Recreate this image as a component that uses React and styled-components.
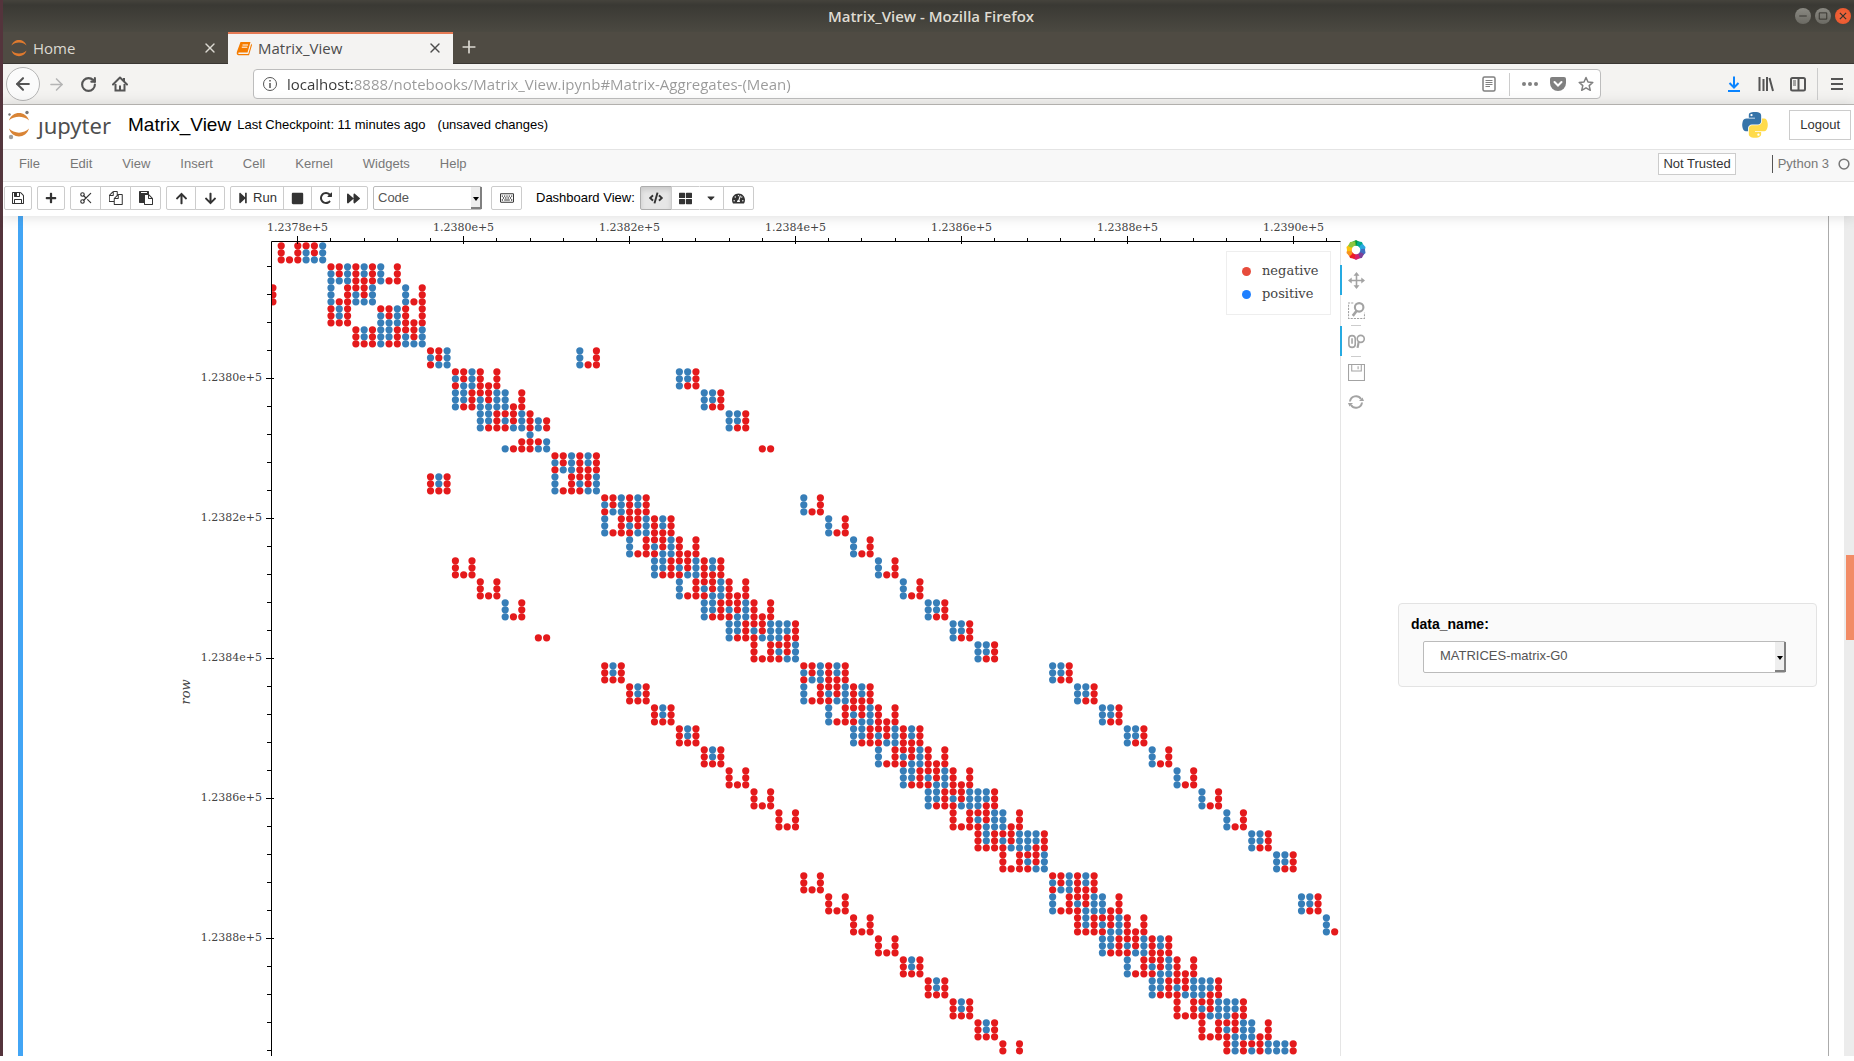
import React from "react";
import styled, { createGlobalStyle, css } from "styled-components";
import { Scissors, X, Plus, RotateCw, ArrowLeft, ArrowRight } from "lucide-react";
import {
  FaArrowUp,
  FaArrowDown,
  FaCaretDown,
  FaCode,
  FaForward,
  FaPlus,
  FaRegKeyboard,
  FaStepForward,
  FaStop,
  FaTachometerAlt,
  FaThLarge,
} from "react-icons/fa";

const sans = `"Liberation Sans", Arial, sans-serif`;
const chrome = `"Open Sans", "Noto Sans", sans-serif`;
const serif = `"DejaVu Serif", serif`;

const Global = createGlobalStyle`
  *, *::before, *::after { box-sizing: border-box; }
  body { margin: 0; background: #fff; font: 13px/18px ${sans}; color: #000; }
  button, input, select { font: inherit; color: inherit; margin: 0; }
  svg { display: block; flex: none; }
`;

/* ---------- window chrome ---------- */

const Window = styled.div`
  border-left: 3px solid #54343c;
`;

const TitleBar = styled.header`
  display: grid;
  grid-template-columns: 1fr auto 1fr;
  align-items: center;
  height: 32px;
  padding: 0 3px 0 8px;
  background: linear-gradient(#45433c, #3a3934 5px, #4b4941);
  color: #dfdbd2;
  font: 600 15px/20px ${chrome};
`;

const WindowTitle = styled.span`
  grid-column: 2;
  font: inherit;
`;

const WindowButtons = styled.div`
  display: flex;
  justify-content: flex-end;
  gap: 4px;
`;

const WindowButton = styled.button`
  display: grid;
  place-items: center;
  width: 16px;
  height: 16px;
  padding: 0;
  border: 0;
  border-radius: 8px;
  background: ${(p) => (p.$close ? "radial-gradient(#f4683e, #e9542a)" : "linear-gradient(#8a8982, #6b6a63)")};
  color: #33322d;
`;

const TabBar = styled.nav`
  display: flex;
  height: 32px;
  background: #4f4b43;
  border-bottom: 1px solid #3a3733;
`;

const Tab = styled.div`
  display: flex;
  align-items: center;
  gap: 6px;
  width: 225px;
  height: 32px;
  padding: 0 10px 2px 8px;
  font: 15px/20px ${chrome};
  color: ${(p) => (p.$active ? "#4c4c4c" : "#dcd9d2")};
  background: ${(p) => (p.$active ? "#f4f3f2" : "transparent")};
  border-top: 2px solid ${(p) => (p.$active ? "#e57a55" : "transparent")};
`;

const TabTitle = styled.span`
  flex: 1;
`;

const PlainButton = styled.button`
  display: grid;
  place-items: center;
  min-width: ${(p) => p.$width || 16}px;
  height: ${(p) => p.$height || 24}px;
  padding: 0;
  border: 0;
  background: none;
  color: ${(p) => p.$color || "inherit"};
`;

const NavBar = styled.div`
  display: flex;
  align-items: center;
  height: 41px;
  padding: 0 1px 0 3px;
  background: #f4f3f1;
  border-bottom: 1px solid #bdbbb8;
  color: #555;
`;

const BackButton = styled(PlainButton)`
  border: 1px solid #b5b5b5;
  border-radius: 50%;
  background: #fbfbfb;
`;

const UrlField = styled.div`
  display: flex;
  flex: 1;
  align-items: center;
  height: 30px;
  margin: 0 117px;
  padding: 0 6px 0 8px;
  background: #fff;
  border: 1px solid #bdbdbd;
  border-radius: 4px;
`;

const UrlInput = styled.input`
  flex: 1;
  min-width: 0;
  height: 24px;
  padding: 0;
  margin: 0 9px;
  border: 0;
  outline: 0;
  font: 15px/24px ${chrome};
  color: transparent;
  background: linear-gradient(90deg, #383838 66px, #999 66px);
  background-clip: text;
  -webkit-background-clip: text;
`;

const Divider = styled.span`
  width: 1px;
  height: ${(p) => p.$height}px;
  margin: 0 ${(p) => p.$gap}px;
  background: #ccc;
`;

/* ---------- notebook header ---------- */

const NotebookHeader = styled.header`
  position: relative;
  z-index: 1;
  background: #fff;
  box-shadow: 0 0 12px 1px rgba(87, 87, 87, 0.2);
`;

const HeaderRow = styled.div`
  display: flex;
  align-items: center;
  height: 44px;
  padding: 0 3px 5px 4px;
`;

const Brand = styled.a`
  display: flex;
  gap: 7px;
  align-items: center;
  color: #4e4e4e;
  text-decoration: none;
  font: 22px/32px "Noto Sans", sans-serif;
`;

const NotebookName = styled.h1`
  margin: 0 6px 0 17px;
  font: 19px/24px ${sans};
`;

const Checkpoint = styled.span`
  margin-right: 12px;
`;

const Spacer = styled.span`
  flex: 1;
`;

const LogoutButton = styled.button`
  height: 30px;
  padding: 0 10px;
  margin-left: 18px;
  border: 1px solid #ccc;
  background: #fff;
  color: #333;
`;

const MenuBar = styled.nav`
  display: flex;
  align-items: center;
  height: 33px;
  padding: 0 4px 3px 1px;
  border: 1px solid #e4e4e4;
  border-width: 1px 0;
  background: #f8f8f8;
  color: #777;
`;

const MenuItem = styled.a`
  padding: 0 15px;
  color: #777;
  text-decoration: none;
  line-height: 18px;
`;

const TrustButton = styled.button`
  height: 22px;
  margin-right: 36px;
  padding: 0 4px;
  border: 1px solid #ccc;
  background: #fff;
  color: #333;
`;

const Kernel = styled.span`
  display: flex;
  align-items: center;
  gap: 9px;
  padding-left: 5px;
  border-left: 1px solid #555;
`;

const Toolbar = styled.div`
  display: flex;
  align-items: center;
  gap: 5px;
  height: 34px;
  padding: 0 0 2px 1px;
`;

const ButtonGroup = styled.div`
  display: flex;
`;

const ToolButton = styled.button`
  display: flex;
  align-items: center;
  justify-content: center;
  gap: 4px;
  height: 24px;
  width: ${(p) => (p.$width ? p.$width + "px" : "auto")};
  padding: 0 6px;
  border: 1px solid #ccc;
  background: #fff;
  color: #333;
  & + & { margin-left: -1px; }
  &:first-child { border-top-left-radius: 2px; border-bottom-left-radius: 2px; }
  &:last-child { border-top-right-radius: 2px; border-bottom-right-radius: 2px; }
  ${(p) =>
    p.$pressed &&
    css`
      background: #e6e6e6;
      border-color: #adadad;
      box-shadow: inset 0 3px 5px rgba(0, 0, 0, 0.125);
    `}
  ${(p) => p.$open && css`border-left-color: #fff;`}
`;

const SelectBox = styled.span`
  position: relative;
  display: block;
  width: ${(p) => p.$width}px;
  margin-right: ${(p) => p.$gap || 0}px;
  color: #555;
  &::before {
    content: "";
    position: absolute;
    right: 0;
    top: 1px;
    bottom: 1px;
    width: 11px;
    background: #eee;
    border: solid #808080;
    border-width: 0 2px 2px 0;
    pointer-events: none;
  }
  &::after {
    content: "";
    position: absolute;
    right: 3px;
    top: calc(50% - 1px);
    border: 3px solid transparent;
    border-top: 4px solid #000;
    border-bottom: 0;
    pointer-events: none;
  }
`;

const Select = styled.select`
  display: block;
  width: 100%;
  height: ${(p) => p.$height}px;
  padding: 0 16px ${(p) => p.$lift || 0}px ${(p) => p.$indent}px;
  border: 1px solid #bbb;
  border-radius: 2px;
  background: #fff;
  appearance: none;
`;

const DashboardLabel = styled.span`
  margin-left: 9px;
`;

/* ---------- notebook body ---------- */

const Body = styled.main`
  display: flex;
`;

const Cell = styled.section`
  display: flex;
  flex: 1;
  align-items: flex-start;
  margin: 0 15px;
  padding: 0 11px 0 150px;
  border-left: 5px solid #42a5f5;
  border-right: 1px solid #ababab;
`;

const PlotTools = styled.div`
  display: flex;
  flex-direction: column;
  align-items: flex-start;
  margin: 19px 0 0 -1px;
  width: 33px;
`;

const PlotTool = styled.button`
  display: grid;
  place-items: center;
  width: 30px;
  height: 30px;
  padding: 0;
  border: 0;
  border-left: 2px solid ${(p) => (p.$active ? "#26aae1" : "transparent")};
  background: none;
  color: #a3a3a3;
`;

const ToolRule = styled.span`
  width: 10px;
  height: 1px;
  margin-left: 11px;
  background: #ccc;
`;

const Widget = styled.div`
  flex: 1;
  margin: 387px 0 0 25px;
  padding: 10px 12px 13px;
  background: #fafafa;
  border: 1px solid #e3e3e3;
  border-radius: 4px;
`;

const WidgetLabel = styled.label`
  display: block;
  margin-bottom: 7px;
  font: bold 14px/20px ${sans};
`;

const WidgetField = styled.div`
  padding-left: 12px;
`;

const ScrollTrack = styled.div`
  width: 10px;
  padding: 339px 0 0 2px;
  background: #ececec;
`;

const ScrollThumb = styled.div`
  height: 85px;
  background: #f28c66;
`;

/* ---------- small drawings ---------- */

function Glyph({ d, size = 14 }) {
  return (
    <svg width={size} height={size} viewBox="0 0 1792 1792" fill="currentColor">
      <path d={d} />
    </svg>
  );
}

const SAVE =
  "M512 1536h768v-384h-768v384zm896 0h128v-896q0-14-10-38.5t-20-34.5l-281-281q-10-10-34-20t-39-10v416q0 40-28 68t-68 28h-576q-40 0-68-28t-28-68v-416h-128v1280h128v-416q0-40 28-68t68-28h832q40 0 68 28t28 68v416zm-384-928v-320q0-13-9.5-22.5t-22.5-9.5h-192q-13 0-22.5 9.5t-9.5 22.5v320q0 13 9.5 22.5t22.5 9.5h192q13 0 22.5-9.5t9.5-22.5zm640 32v928q0 40-28 68t-68 28h-1344q-40 0-68-28t-28-68v-1344q0-40 28-68t68-28h928q40 0 88 20t76 48l280 280q28 28 48 76t20 88z";
const COPY =
  "M1664 384q40 0 68 28t28 68v1216q0 40-28 68t-68 28h-960q-40 0-68-28t-28-68v-288h-544q-40 0-68-28t-28-68v-672q0-40 20-88t48-76l408-408q28-28 76-48t88-20h416q40 0 68 28t28 68v328q68-40 128-40h416zm-544 213l-299 299h299v-299zm-640-384l-299 299h299v-299zm196 647l316-316v-416h-384v416q0 40-28 68t-68 28h-416v640h512v-256q0-40 20-88t48-76zm956 804v-1152h-384v416q0 40-28 68t-68 28h-416v640h896z";
const PASTE =
  "M768 1664h896v-640h-416q-40 0-68-28t-28-68v-416h-384v1152zm256-1440v-64q0-13-9.5-22.5t-22.5-9.5h-704q-13 0-22.5 9.5t-9.5 22.5v64q0 13 9.5 22.5t22.5 9.5h704q13 0 22.5-9.5t9.5-22.5zm256 672h299l-299-299v299zm512 128v672q0 40-28 68t-68 28h-960q-40 0-68-28t-28-68v-160h-544q-40 0-68-28t-28-68v-1344q0-40 28-68t68-28h1088q40 0 68 28t28 68v328q21 13 36 28l408 408q28 28 48 76t20 88z";
const REPEAT =
  "M1664 256v448q0 26-19 45t-45 19h-448q-42 0-59-40-17-39 14-69l138-138q-148-137-349-137-104 0-198.5 40.5t-163.5 109.5-109.5 163.5-40.5 198.5 40.5 198.5 109.5 163.5 163.5 109.5 198.5 40.5q119 0 225-52t179-147q7-10 23-12 15 0 25 9l137 138q9 8 9.5 20.5t-7.5 22.5q-109 132-264 204.5t-327 72.5q-156 0-298-61t-245-164-164-245-61-298 61-298 164-245 245-164 298-61q147 0 284.5 55.5t244.5 156.5l130-129q29-31 70-14 39 17 39 59z";

const JupyterMark = () => (
  <svg width="24" height="30" viewBox="0 0 24 30">
    <path d="M2 10.500C5 0.500 19 0.500 22 10.500C17 5.500 7 5.500 2 10.500Z" fill="#d98435" />
    <path d="M2 18.500C5 29 19 29 22 18.500C17 24 7 24 2 18.500Z" fill="#d98435" />
    <circle cx="20" cy="2.500" r="1.700" fill="#767677" />
    <circle cx="2.500" cy="4.500" r="1.200" fill="#767677" />
    <circle cx="4" cy="27" r="2.200" fill="#9e9e9e" />
  </svg>
);

const HomeFavicon = () => (
  <svg width="16" height="18" viewBox="0 0 16 18" fill="#e07a2e">
    <path d="M0.500 6.500C2.500 -1 13.500 -1 15.500 6.500C12 2.500 4 2.500 0.500 6.500Z" />
    <path d="M0.500 11.500C2.500 19 13.500 19 15.500 11.500C12 15.500 4 15.500 0.500 11.500Z" />
  </svg>
);

const BookFavicon = () => (
  <svg width="16" height="16" viewBox="0 0 16 16">
    <path d="M4.500 2H14.500L11.500 12.500H3C1.800 12.500 2 14 3 14H12.300L15 4.500V3.500L16 5L13 15.200H2.500C0.500 15.200 0.500 13 1 11.500Z" fill="#f57c00" />
    <path d="M6.500 5H12M5.800 7.200H11.300" stroke="#fff" strokeWidth="1" />
  </svg>
);

const PythonMark = () => (
  <svg width="32" height="32" viewBox="0 0 128 128">
    <path
      transform="translate(0 10)"
      fill="#3674a9"
      d="M63.391 1.988c-4.222.02-8.252.379-11.8 1.007-10.45 1.846-12.346 5.71-12.346 12.837v9.411h24.693v3.137H29.977c-7.176 0-13.46 4.313-15.426 12.521-2.268 9.405-2.368 15.275 0 25.096 1.755 7.311 5.947 12.519 13.124 12.519h8.491V67.234c0-8.151 7.051-15.34 15.426-15.34h24.665c6.866 0 12.346-5.654 12.346-12.548V15.833c0-6.693-5.646-11.72-12.346-12.837-4.244-.706-8.645-1.027-12.866-1.008zM50.037 9.557c2.55 0 4.634 2.117 4.634 4.721 0 2.593-2.083 4.69-4.634 4.69-2.56 0-4.633-2.097-4.633-4.69-.001-2.604 2.073-4.721 4.633-4.721z"
    />
    <path
      transform="translate(0 10)"
      fill="#ffdb4b"
      d="M91.682 28.38v10.966c0 8.5-7.208 15.655-15.426 15.655H51.591c-6.756 0-12.346 5.783-12.346 12.549v23.515c0 6.691 5.818 10.628 12.346 12.547 7.816 2.297 15.312 2.713 24.665 0 6.216-1.801 12.346-5.423 12.346-12.547v-9.412H63.938v-3.138h37.012c7.176 0 9.852-5.005 12.348-12.519 2.578-7.735 2.467-15.174 0-25.096-1.774-7.145-5.161-12.521-12.348-12.521h-9.268zM77.809 87.927c2.561 0 4.634 2.097 4.634 4.692 0 2.602-2.074 4.719-4.634 4.719-2.55 0-4.633-2.117-4.633-4.719 0-2.595 2.083-4.692 4.633-4.692z"
    />
  </svg>
);

const Line = ({ size = 16, width = 2, children, fill = "none" }) => (
  <svg width={size} height={size} viewBox="0 0 16 16" fill={fill} stroke="currentColor" strokeWidth={width}>
    {children}
  </svg>
);

const HomeIcon = () => (
  <Line>
    <path d="M1 8.500L8 1.500L15 8.500" strokeLinecap="round" strokeLinejoin="round" />
    <path d="M3.500 8V14.500H12.500V8" />
    <path d="M8 14.500V9.500" />
    <path d="M12 2V5" />
  </Line>
);
const InfoIcon = () => (
  <Line width={1}>
    <circle cx="8" cy="8" r="6.500" />
    <path d="M8 7V12M8 4V5.500" strokeWidth="1.500" />
  </Line>
);
const ReaderIcon = () => (
  <Line width={1.5}>
    <rect x="2" y="1" width="12" height="14" rx="1.500" />
    <path d="M4.500 4.500H11.500M4.500 6.500H11.500M4.500 8.500H11.500M4.500 10.500H9" strokeWidth="1" />
  </Line>
);
const DotsIcon = () => (
  <Line fill="currentColor" width={0}>
    <circle cx="2" cy="8" r="2" />
    <circle cx="8" cy="8" r="2" />
    <circle cx="14" cy="8" r="2" />
  </Line>
);
const PocketIcon = () => (
  <Line width={2}>
    <path d="M2 1H14Q16 1 16 3V7A8 8 0 0 1 0 7V3Q0 1 2 1Z" fill="currentColor" stroke="none" />
    <path d="M4.500 6L8 9.500L11.500 6" stroke="#fff" strokeLinecap="round" />
  </Line>
);
const StarIcon = () => (
  <Line width={1.5}>
    <path d="M8 1.500L10 6L14.800 6.400L11.200 9.600L12.300 14.300L8 11.800L3.700 14.300L4.800 9.600L1.200 6.400L6 6Z" strokeLinejoin="round" />
  </Line>
);
const DownloadIcon = () => (
  <Line>
    <path d="M8 0.500V11M3.500 7L8 11.500L12.500 7M2 15H14" />
  </Line>
);
const LibraryIcon = () => (
  <Line>
    <path d="M1.500 1V15M5.500 3V15M9 1V15M11.500 2L15 15" />
  </Line>
);
const SidebarIcon = () => (
  <Line>
    <rect x="1" y="2" width="14" height="12.500" rx="1.500" />
    <path d="M8.500 2V14" />
    <path d="M3 5H6M3 7H6M3 9H6" strokeWidth="1" />
  </Line>
);
const MenuIcon = () => (
  <Line>
    <path d="M2 3H14M2 8H14M2 13H14" />
  </Line>
);

const BOKEH_COLORS = ["#009b3a", "#00a98f", "#29a9e0", "#3f6fc0", "#7b3f98", "#d6206b", "#ed1c24", "#f7931e", "#fcc40c", "#8cc63f"];
const BokehMark = () => (
  <svg width="20" height="20" viewBox="-10 -10 20 20">
    {BOKEH_COLORS.map((c, i) => (
      <path key={c} d="M-4 -8L0 -10L4.500 -7.500L2.500 -4L-2.500 -4.500Z" fill={c} transform={`rotate(${i * 36})`} />
    ))}
  </svg>
);
const PanIcon = () => (
  <Line size={17} width={1.5}>
    <path d="M8 2V14M2 8H14" />
    <path d="M8 0L10.800 3.500H5.200ZM8 16L10.800 12.500H5.200ZM0 8L3.500 5.200V10.800ZM16 8L12.500 5.200V10.800Z" fill="currentColor" stroke="none" />
  </Line>
);
const BoxZoomIcon = () => (
  <Line size={17} width={2}>
    <circle cx="10.500" cy="5" r="4" />
    <path d="M8 8.500L4.500 13" strokeWidth="2.500" />
    <path d="M5 1H0.500V15.500H15.500V10" strokeWidth="1" strokeDasharray="2 1" />
  </Line>
);
const WheelZoomIcon = () => (
  <Line size={17} width={1.5}>
    <rect x="0.800" y="2.500" width="6" height="11" rx="3" />
    <path d="M3.800 5V10" />
    <circle cx="12" cy="5.500" r="3.300" />
    <path d="M10 8.500L9 14" strokeWidth="2" />
  </Line>
);
const DiskIcon = () => (
  <Line size={17} width={1}>
    <path d="M0.500 0.500H15.500V15.500H0.500Z M3.500 0.500V6.500H12.500V0.500M9.500 2V5" />
  </Line>
);
const ResetIcon = () => (
  <Line size={16} width={2}>
    <path d="M2 7.500A6 6 0 0 1 13 5M14 8.500A6 6 0 0 1 3 11" />
    <path d="M11 7H16L14.500 3.500ZM0 9H5L1.500 12.500Z" fill="currentColor" stroke="none" />
  </Line>
);

/* ---------- sparse matrix plot ---------- */

// 3x3 blocks, listed top row first: r = negative, b = positive
const BLOCKS = {
  A: "rrb brb rbb",
  D: "rrb brb bbb",
  U: "r.r r.r rrr",
  V: "b.r b.r brr",
  P: "bbr bbr brr",
  Q: "rbr rbr rrr",
  G: "r.. rbr rbr",
  H: "... ..r brr",
  J: "b.. rrb rbb",
  K: "... ... .rr",
  L: "b.. b.. br.",
};

// one entry per block row: "<block column><block>"
const BLOCK_ROWS = [
  "-1U 0D",
  "1D 2Q 3V",
  "-2R 1V 2D 4V",
  "1Q 3D 4U",
  "2Q 3P 4D",
  "5A 11V",
  "6A 7U 15P",
  "6P 7D 8V 16P",
  "7P 8A 9G 17P",
  "8H 9J 18K",
  "10A 11Q",
  "10V 11A 5Q",
  "12A 13Q 20V",
  "12V 13A 14Q 21V",
  "13V 14A 15U 22V",
  "14P 15A 16Q 23V 6U",
  "15V 16A 17U 24V 7U",
  "16P 17A 18U 25P 8V",
  "17P 18A 19P 26P 9K",
  "18U 19A 27P",
  "20A 21Q 12Q 30P",
  "20V 21A 22Q 13Q 31P",
  "21V 22A 23U 14Q 32P",
  "22P 23A 24Q 15Q 33P",
  "23V 24A 25U 16Q 34V",
  "24P 25A 26U 17U 35V",
  "25P 26A 27P 18U 36V",
  "26U 27A 28V 19U 37V",
  "27Q 28A 29P 38P",
  "28U 29A 39P",
  "30A 31Q 20U",
  "30V 31A 32V 21U 40P",
  "31Q 32A 33U 22U 41L",
  "32P 33A 34Q 23U",
  "33V 34A 35U 24Q",
  "34P 35A 36P 25Q",
  "35U 36A 37P 26Q",
  "36U 37A 38V 27Q",
  "37Q 38A 39P 28U",
];
BLOCKS.R = "..r ..r ..r";

const LEFT = 98.5;
const TOP = 25.5;
const RIGHT = 1167.5;
const HEIGHT = 840;
const colX = (c) => 124.8 + c * 8.295;
const rowY = (r) => 29.8 + r * 7;

const POINTS = BLOCK_ROWS.flatMap((line, i) =>
  line.split(" ").flatMap((entry) => {
    const j = parseInt(entry, 10);
    return BLOCKS[entry.slice(-1)].split(" ").flatMap((cells, dr) =>
      [...cells].map((v, dc) => ({ v, x: colX(3 * j + 1 + dc), y: rowY(3 * i + dr), r: 3 * i + dr }))
    );
  })
).filter((p) => p.v !== "." && p.r < 116);

const range = (from, to, step) => {
  const out = [];
  for (let n = from; n <= to; n += step) out.push(n);
  return out;
};

const TickText = styled.text`
  font: 11px ${serif};
  fill: #444;
`;
const LegendText = styled.text`
  font: 13px ${serif};
  fill: #444;
`;
const AxisTitle = styled.text`
  font: italic 13px ${serif};
  fill: #444;
`;

function MatrixPlot() {
  return (
    <svg width="1168" height={HEIGHT} viewBox={`0 0 1168 ${HEIGHT}`} role="img" aria-label="Matrix view">
      <clipPath id="frame">
        <rect x={LEFT} y={TOP} width={RIGHT - LEFT} height={HEIGHT - TOP} />
      </clipPath>
      <path d={`M${RIGHT} ${TOP}V${HEIGHT}`} stroke="#e5e5e5" />
      <g clipPath="url(#frame)">
        {POINTS.map((p, i) => (
          <circle key={i} cx={p.x} cy={p.y} r="3.600" fill={p.v === "r" ? "#e41a1c" : "#377eb8"} />
        ))}
      </g>
      <path d={`M${RIGHT} ${TOP}H${LEFT}V${HEIGHT}`} fill="none" stroke="#000" />
      {range(0, 124, 4).map((c) => {
        const x = Math.floor(colX(c)) + 0.5;
        const major = c % 20 === 0;
        return (
          <g key={c}>
            <path d={`M${x} ${major ? 20 : 22}V${major ? 28 : 25}`} stroke="#000" />
            {major && (
              <TickText x={x} y="15" textAnchor="middle">{`1.23${78 + c / 10}e+5`}</TickText>
            )}
          </g>
        );
      })}
      {range(3, 115, 4).map((r) => {
        const y = Math.floor(rowY(r)) + 0.5;
        const value = r - 19;
        const major = value % 20 === 0;
        return (
          <g key={r}>
            <path d={`M${major ? 93 : 94} ${y}H${major ? 101 : 98}`} stroke="#000" />
            {major && (
              <TickText x="89" y={y + 2} textAnchor="end">{`1.23${80 + value / 10}e+5`}</TickText>
            )}
          </g>
        );
      })}
      <AxisTitle transform="translate(17 476) rotate(-90)" textAnchor="middle">
        row
      </AxisTitle>
      <rect x="1053.500" y="35.500" width="104" height="63" fill="#fff" stroke="#eee" />
      <circle cx="1073.500" cy="55.500" r="4.500" fill="#e74c3c" />
      <circle cx="1073.500" cy="78.500" r="4.500" fill="#1f80ff" />
      <LegendText x="1089" y="59">negative</LegendText>
      <LegendText x="1089" y="82">positive</LegendText>
    </svg>
  );
}

const MENUS = ["File", "Edit", "View", "Insert", "Cell", "Kernel", "Widgets", "Help"];

export default function App() {
  return (
    <>
      <Global />
      <Window>
        <TitleBar>
          <WindowTitle>Matrix_View - Mozilla Firefox</WindowTitle>
          <WindowButtons>
            <WindowButton aria-label="Minimize">
              <Line size={10} width={1.5}><path d="M2 8H14" /></Line>
            </WindowButton>
            <WindowButton aria-label="Maximize">
              <Line size={10} width={1.5}><path d="M2 3H14V13H2Z" /></Line>
            </WindowButton>
            <WindowButton $close aria-label="Close">
              <Line size={10}><path d="M3 3L13 13M13 3L3 13" /></Line>
            </WindowButton>
          </WindowButtons>
        </TitleBar>
        <TabBar>
          <Tab>
            <HomeFavicon />
            <TabTitle>Home</TabTitle>
            <PlainButton aria-label="Close Home"><X size={16} /></PlainButton>
          </Tab>
          <Tab $active>
            <BookFavicon />
            <TabTitle>Matrix_View</TabTitle>
            <PlainButton aria-label="Close Matrix_View"><X size={16} /></PlainButton>
          </Tab>
          <PlainButton $width={32} $height={30} $color="#dcd9d2" aria-label="New tab"><Plus size={20} /></PlainButton>
        </TabBar>
        <NavBar>
          <BackButton $width={34} $height={34} aria-label="Back"><ArrowLeft size={20} strokeWidth={2.5} /></BackButton>
          <PlainButton $width={32} $color="#b5b5b5" aria-label="Forward"><ArrowRight size={19} /></PlainButton>
          <PlainButton $width={32} aria-label="Reload"><RotateCw size={17} strokeWidth={3} /></PlainButton>
          <PlainButton $width={32} aria-label="Home page"><HomeIcon /></PlainButton>
          <UrlField>
            <InfoIcon />
            <UrlInput
              aria-label="Address"
              defaultValue="localhost:8888/notebooks/Matrix_View.ipynb#Matrix-Aggregates-(Mean)"
            />
            <PlainButton $color="#808080" aria-label="Reader view"><ReaderIcon /></PlainButton>
            <Divider $height={23} $gap={12} />
            <PlainButton $color="#808080" aria-label="Page actions"><DotsIcon /></PlainButton>
            <PlainButton $width={40} $color="#808080" aria-label="Save to Pocket"><PocketIcon /></PlainButton>
            <PlainButton $color="#808080" aria-label="Bookmark"><StarIcon /></PlainButton>
          </UrlField>
          <PlainButton $width={32} $color="#0a84ff" aria-label="Downloads"><DownloadIcon /></PlainButton>
          <PlainButton $width={32} aria-label="Library"><LibraryIcon /></PlainButton>
          <PlainButton $width={32} aria-label="Sidebars"><SidebarIcon /></PlainButton>
          <Divider $height={32} $gap={3} />
          <PlainButton $width={32} aria-label="Menu"><MenuIcon /></PlainButton>
        </NavBar>

        <NotebookHeader>
          <HeaderRow>
            <Brand href="#home"><JupyterMark />ȷupyter</Brand>
            <NotebookName>Matrix_View</NotebookName>
            <Checkpoint>Last Checkpoint: 11 minutes ago</Checkpoint>
            <span>(unsaved changes)</span>
            <Spacer />
            <PythonMark />
            <LogoutButton>Logout</LogoutButton>
          </HeaderRow>
          <MenuBar>
            {MENUS.map((m) => (
              <MenuItem key={m} href={`#${m.toLowerCase()}`}>{m}</MenuItem>
            ))}
            <Spacer />
            <TrustButton>Not Trusted</TrustButton>
            <Kernel>
              Python 3
              <Line size={12} width={2}><circle cx="8" cy="8" r="6.500" /></Line>
            </Kernel>
          </MenuBar>
          <Toolbar>
            <ButtonGroup>
              <ToolButton $width={28} aria-label="Save"><Glyph d={SAVE} /></ToolButton>
            </ButtonGroup>
            <ButtonGroup>
              <ToolButton $width={28} aria-label="Insert cell"><FaPlus size={12} /></ToolButton>
            </ButtonGroup>
            <ButtonGroup>
              <ToolButton $width={31} aria-label="Cut"><Scissors size={14} /></ToolButton>
              <ToolButton $width={31} aria-label="Copy"><Glyph d={COPY} /></ToolButton>
              <ToolButton $width={31} aria-label="Paste"><Glyph d={PASTE} /></ToolButton>
            </ButtonGroup>
            <ButtonGroup>
              <ToolButton $width={30} aria-label="Move up"><FaArrowUp size={13} /></ToolButton>
              <ToolButton $width={30} aria-label="Move down"><FaArrowDown size={13} /></ToolButton>
            </ButtonGroup>
            <ButtonGroup>
              <ToolButton $width={54}><FaStepForward size={12} />Run</ToolButton>
              <ToolButton $width={29} aria-label="Interrupt"><FaStop size={13} /></ToolButton>
              <ToolButton $width={29} aria-label="Restart"><Glyph d={REPEAT} /></ToolButton>
              <ToolButton $width={29} aria-label="Restart and run all"><FaForward size={13} /></ToolButton>
            </ButtonGroup>
            <SelectBox $width={109} $gap={4}>
              <Select aria-label="Cell type" $height={24} $indent={4} defaultValue="Code">
                <option>Code</option>
                <option>Markdown</option>
              </Select>
            </SelectBox>
            <ButtonGroup>
              <ToolButton $width={31} aria-label="Command palette"><FaRegKeyboard size={14} /></ToolButton>
            </ButtonGroup>
            <DashboardLabel>Dashboard View:</DashboardLabel>
            <ButtonGroup>
              <ToolButton $width={32} $pressed aria-label="Notebook view"><FaCode size={14} /></ToolButton>
              <ToolButton $width={29} aria-label="Grid layout"><FaThLarge size={13} /></ToolButton>
              <ToolButton $width={25} $open aria-label="Layouts"><FaCaretDown size={12} /></ToolButton>
              <ToolButton $width={31} aria-label="Dashboard preview"><FaTachometerAlt size={13} /></ToolButton>
            </ButtonGroup>
          </Toolbar>
        </NotebookHeader>

        <Body>
          <Cell>
            <MatrixPlot />
            <PlotTools>
              <PlotTool aria-label="Bokeh"><BokehMark /></PlotTool>
              <PlotTool $active aria-label="Pan"><PanIcon /></PlotTool>
              <PlotTool aria-label="Box zoom"><BoxZoomIcon /></PlotTool>
              <ToolRule />
              <PlotTool $active aria-label="Wheel zoom"><WheelZoomIcon /></PlotTool>
              <ToolRule />
              <PlotTool aria-label="Save plot"><DiskIcon /></PlotTool>
              <PlotTool aria-label="Reset"><ResetIcon /></PlotTool>
            </PlotTools>
            <Widget>
              <WidgetLabel htmlFor="data-name">data_name:</WidgetLabel>
              <WidgetField>
                <SelectBox $width={363}>
                  <Select id="data-name" $height={32} $indent={16} $lift={2} defaultValue="MATRICES-matrix-G0">
                    <option>MATRICES-matrix-G0</option>
                    <option>MATRICES-matrix-G1</option>
                  </Select>
                </SelectBox>
              </WidgetField>
            </Widget>
          </Cell>
          <ScrollTrack>
            <ScrollThumb />
          </ScrollTrack>
        </Body>
      </Window>
    </>
  );
}
